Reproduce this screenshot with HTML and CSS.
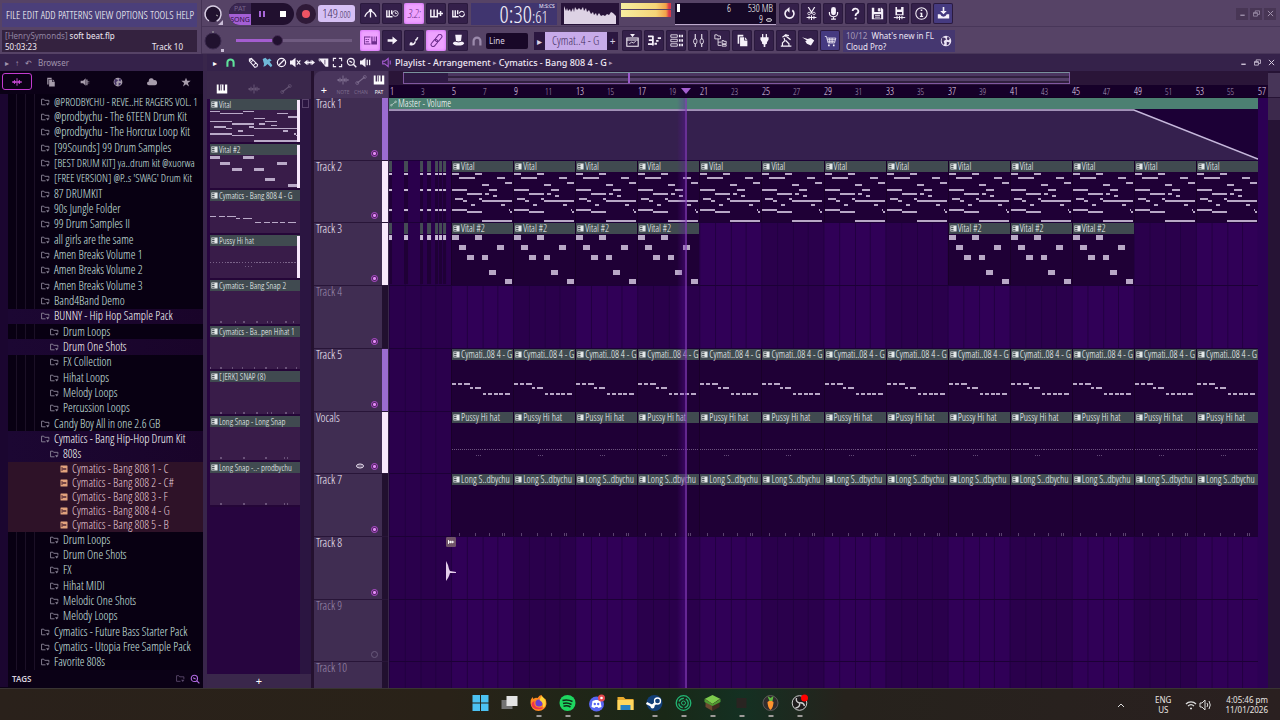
FILE: index.html
```html
<!DOCTYPE html>
<html lang="en">
<head>
<meta charset="utf-8">
<title>soft beat.flp</title>
<link rel="stylesheet" href="styles.css">
</head>
<body>
<svg class="sprite" aria-hidden="true">
  <symbol id="metronome" viewBox="0 0 16 16"><path d="M8 13V5M1 12Q3 6 8 5Q13 6 15 12" fill="none" stroke="currentColor" stroke-width="1.6"/><circle cx="8" cy="4" r="2" fill="currentColor"/></symbol>
  <symbol id="waitkeys" viewBox="0 0 16 16"><path d="M1 4v8h7M4 4v8M7 4v5" fill="none" stroke="currentColor" stroke-width="1.7"/><circle cx="11.500" cy="8" r="3.500" fill="none" stroke="currentColor"/><path d="M11.500 6v2h2" fill="none" stroke="currentColor"/></symbol>
  <symbol id="keysplus" viewBox="0 0 16 16"><path d="M1 3v9h8V3M5 3v9M10 8h6M13 5v6" fill="none" stroke="currentColor" stroke-width="1.8"/></symbol>
  <symbol id="keysloop" viewBox="0 0 16 16"><path d="M1 4v8h7M4 4v8M7 4v5" fill="none" stroke="currentColor" stroke-width="1.7"/><path d="M9 8a3 3 0 0 1 5-2l1 1M15 8a3 3 0 0 1-5 3L9 10" fill="none" stroke="currentColor" stroke-width="1.300"/></symbol>
  <symbol id="keyboard" viewBox="0 0 16 16"><path d="M0 3h8v1.200H0zM0 11.800h8V13H0zM0 3h1v10H0zM2 6h1.500v1.500H2zM4.500 6H6v1.500H4.500zM2 9h4v1H2zM9 3h1.500v6H12V3h1v6h1.500V3H16v10H9z" fill="currentColor"/></symbol>
  <symbol id="arrow" viewBox="0 0 16 16"><path d="M2 6.500h6V3l6 5-6 5V9.500H2z" fill="currentColor"/></symbol>
  <symbol id="slide" viewBox="0 0 16 16"><path d="M2 13q6 1 7-4M9 8q2-1 3-4" fill="none" stroke="currentColor" stroke-width="1.800"/><circle cx="4" cy="12" r="1.800" fill="currentColor"/></symbol>
  <symbol id="link" viewBox="0 0 16 16"><g fill="none" stroke="currentColor" stroke-width="1.300" transform="rotate(-50 8 8)"><rect x="-1" y="5.500" width="10" height="5" rx="2.500"/><rect x="7" y="5.500" width="10" height="5" rx="2.500"/></g></symbol>
  <symbol id="hat" viewBox="0 0 16 16"><path d="M4 1h8l-1 8H5z" fill="currentColor"/><ellipse cx="8" cy="11.500" rx="7" ry="2.700" fill="currentColor"/><path d="M4.500 9q3.500 1.600 7 0" stroke="#35204a" fill="none"/></symbol>
  <symbol id="magnet" viewBox="0 0 16 16"><path d="M3.500 14V8a4.500 4.500 0 0 1 9 0v6" fill="none" stroke="currentColor" stroke-width="3"/></symbol>
  <symbol id="playlist" viewBox="0 0 16 16"><path d="M1 5h14v10H1zM1 7.500h14" fill="none" stroke="currentColor" stroke-width="1.300"/><path d="M5 0h6L8 4z" fill="currentColor"/><path d="M4 12l3-2 2 1 3-2" stroke="currentColor" fill="none"/></symbol>
  <symbol id="pianoroll" viewBox="0 0 16 16"><path d="M0 3h6M1 7.500h5M0 12.500h6M6 2v12M8 12h3M10 8.500h3M12 5h4" fill="none" stroke="currentColor" stroke-width="2.200"/></symbol>
  <symbol id="rack" viewBox="0 0 16 16"><path d="M1 1h8v3H1zM1 6.500h8v3H1zM1 12h8v3H1z" fill="none" stroke="currentColor"/><path d="M11 1h2v3h-2zM14 1h2v3h-2zM11 6.500h2v3h-2zM14 6.500h2v3h-2zM11 12h2v3h-2zM14 12h2v3h-2z" fill="currentColor"/></symbol>
  <symbol id="mixer" viewBox="0 0 16 16"><path d="M4 0v16M12 0v16" stroke="currentColor" stroke-width="1.300"/><rect x="2" y="6" width="4" height="6" rx="2" fill="#35204a" stroke="currentColor"/><rect x="10" y="6" width="4" height="6" rx="2" fill="#35204a" stroke="currentColor"/></symbol>
  <symbol id="treeview" viewBox="0 0 16 16"><path d="M1 1h3l1 1.500h3V6H1zM5 6v8h4M5 10h4M10 8h2v1h3v3h-5zM10 13h5v2h-5z" fill="none" stroke="currentColor"/></symbol>
  <symbol id="files" viewBox="0 0 16 16"><path d="M2 1h7v2H4v9H2z" fill="currentColor"/><path d="M5 4h5v4h4v7H5zM11 4l3 3h-3z" fill="currentColor"/></symbol>
  <symbol id="plug" viewBox="0 0 16 16"><path d="M5 0h1.500v4h3V0H11v4h2v3l-2 3v2l-2 1v3H7v-3l-2-1v-2L3 7V4h2z" fill="currentColor"/></symbol>
  <symbol id="repair" viewBox="0 0 16 16"><path d="M3 4l4-3 4 1M5 5l1 3-3 3v4M7 8l4 4v3M1 15h13M8 3l5 4" fill="none" stroke="currentColor" stroke-width="1.500"/><circle cx="7" cy="2" r="1.500" fill="currentColor"/></symbol>
  <symbol id="tap" viewBox="0 0 16 16"><path d="M0 4l7 2 4-1 4 3-4 6-5-2-2-3 2-1z" fill="currentColor"/></symbol>
  <symbol id="cart" viewBox="0 0 16 16"><path d="M1 3h2l2 8h8l1.500-6H4M4 7h10M5 9h8M7 5v6M10 5v6" fill="none" stroke="currentColor"/><path d="M5 13h2v2H5zM11 13h2v2h-2z" fill="currentColor"/></symbol>
  <symbol id="undo" viewBox="0 0 16 16"><path d="M4.500 4a5.500 5.500 0 1 0 7 0" fill="none" stroke="currentColor" stroke-width="2"/><path d="M8 0v7L4 3.500z" fill="currentColor"/></symbol>
  <symbol id="cut" viewBox="0 0 16 16"><path d="M4 0l5 8M12 0L7 8" stroke="currentColor" stroke-width="1.500"/><circle cx="5" cy="8" r="1.600" fill="none" stroke="currentColor"/><circle cx="11" cy="8" r="1.600" fill="none" stroke="currentColor"/><path d="M2 13h12M5 11v4M8 10v6M11 11v4" stroke="currentColor" stroke-width="1.300"/></symbol>
  <symbol id="mic" viewBox="0 0 16 16"><rect x="5" y="0" width="6" height="10" rx="3" fill="currentColor"/><path d="M3 6v2a5 4 0 0 0 10 0V6M8 12v3M5 15h6" fill="none" stroke="currentColor" stroke-width="1.500"/></symbol>
  <symbol id="help" viewBox="0 0 16 16"><path d="M4.500 5a3.500 3.200 0 1 1 5 3Q8 9 8 11" fill="none" stroke="currentColor" stroke-width="2.200"/><path d="M7 13h2.300v2.300H7z" fill="currentColor"/></symbol>
  <symbol id="save" viewBox="0 0 16 16"><path fill-rule="evenodd" d="M1 1h12l2 2v12H1zM4 1v5h8V1zM3.500 9v5h9V9z" fill="currentColor"/><path d="M9 2h2v3H9zM5 10.500h6M5 12.500h6" stroke="currentColor" fill="currentColor"/></symbol>
  <symbol id="savewave" viewBox="0 0 16 16"><path fill-rule="evenodd" d="M3 0h10v10H3zM5 0v3h5V0zM5 6v3h6V6z" fill="currentColor"/><path d="M1 13h14M5 11v4M8 11v5M11 11v4" stroke="currentColor" stroke-width="1.200"/></symbol>
  <symbol id="info" viewBox="0 0 16 16"><circle cx="8" cy="8" r="7" fill="none" stroke="currentColor" stroke-width="1.300"/><path d="M7 3h2v2H7zM6 7h3v4h1v1.200H6V11h1V8H6z" fill="currentColor"/></symbol>
  <symbol id="download" viewBox="0 0 16 16"><path d="M7 0h2v5h3L8 9 4 5h3zM1 9h3q1 3 4 3t4-3h3v5H1z" fill="currentColor"/></symbol>
  <symbol id="globe" viewBox="0 0 16 16"><circle cx="8" cy="8" r="7" fill="currentColor"/><path d="M3 3l4 1 1 2-3 2 1 4-2 1-2-5zM10 2l3 2-1 3-3-1zM9 9l4 1-2 3-2 1z" fill="#453366"/></symbol>
  <symbol id="wave" viewBox="0 0 16 16"><path d="M0 8h16M2 6.500v3M4 5v6M6 6.500v3M8 2v12M10 6v4M12 5v6M14 7v2" fill="none" stroke="currentColor" stroke-width="1.400"/></symbol>
  <symbol id="speakerplug" viewBox="0 0 16 16"><path d="M1 6h4l4-4v12l-4-4H1zM10 4h2v3h3v1h-3v1h3v1h-3v3h-2z" fill="currentColor"/></symbol>
  <symbol id="cloud" viewBox="0 0 16 16"><path d="M3 13a3 3 0 0 1 0-6 4 4 0 0 1 8-2 4 4 0 0 1 2 8z" fill="currentColor"/></symbol>
  <symbol id="star" viewBox="0 0 16 16"><path d="M8 1l2 5h5.500L11 9.500l1.800 5.500L8 11.700 3.200 15 5 9.500.5 6H6z" fill="currentColor"/></symbol>
  <symbol id="pencil" viewBox="0 0 16 16"><path d="M2 3l3-1 9 9-1 3-3 1-8-9zM2 6l3-3M4 8l4-4M8 12l4-4" fill="none" stroke="currentColor" stroke-width="1.500"/></symbol>
  <symbol id="brush" viewBox="0 0 16 16"><path d="M1 3l4-2 3 3 3-2 3 3-3 2 4 5-2 3-5-5-3 3-3 1 1-4-1-3z" fill="currentColor"/></symbol>
  <symbol id="deny" viewBox="0 0 16 16"><circle cx="8" cy="8" r="6" fill="none" stroke="currentColor" stroke-width="1.800"/><path d="M12 4l-8 8" stroke="currentColor" stroke-width="1.800"/></symbol>
  <symbol id="mute" viewBox="0 0 16 16"><path d="M0 5h3l5-4v14l-5-4H0z" fill="currentColor"/><path d="M10 5l5 6M15 5l-5 6" stroke="currentColor" stroke-width="1.600"/></symbol>
  <symbol id="slip" viewBox="0 0 16 16"><path d="M0 8l5-4v3h6V4l5 4-5 4V9H5v3z" fill="currentColor"/><path d="M6 5v6M10 5v6" stroke="currentColor"/></symbol>
  <symbol id="slice" viewBox="0 0 16 16"><path d="M1 2h14v12h-4zM1 2v3l3 3" fill="currentColor"/><path d="M10 4v7" stroke="#35204a"/></symbol>
  <symbol id="select" viewBox="0 0 16 16"><path d="M2 6V2h4M10 2h4v4M14 10v4h-4M6 14H2v-4" fill="none" stroke="currentColor" stroke-width="1.600"/></symbol>
  <symbol id="zoom" viewBox="0 0 16 16"><circle cx="7" cy="7" r="5" fill="none" stroke="currentColor" stroke-width="1.800"/><path d="M11 11l4 4M5 6l4 2" stroke="currentColor" stroke-width="2"/></symbol>
  <symbol id="playback" viewBox="0 0 16 16"><path d="M0 5h3l5-4v14l-5-4H0z" fill="currentColor"/><path d="M10.500 4v8M14 4v8" stroke="currentColor" stroke-width="1.800"/></symbol>
  <symbol id="speaker" viewBox="0 0 16 16"><path d="M1 6h3l5-4v12l-5-4H1zM12 5v6" fill="none" stroke="currentColor" stroke-width="1.600"/></symbol>
  <symbol id="piano" viewBox="0 0 16 16"><path d="M1 2h2.500v8h2V2H10v8h2V2h3v12H1z" fill="currentColor"/><path d="M6.500 2h1v8h-1z" fill="#35204a"/></symbol>
  <symbol id="auto" viewBox="0 0 16 16"><path d="M3 12l10-8" stroke="currentColor" stroke-width="1.400"/><circle cx="3" cy="12" r="2" fill="none" stroke="currentColor"/><circle cx="13" cy="4" r="2" fill="none" stroke="currentColor"/></symbol>
  <symbol id="folder" viewBox="0 0 16 16"><path d="M8 13H1V3h4l1.500 2H14v4" fill="none" stroke="currentColor" stroke-width="1.600"/><path d="M9 10l6 0-3 4z" fill="currentColor"/></symbol>
  <symbol id="sample" viewBox="0 0 16 16"><rect x="1" y="1" width="14" height="14" rx="1" fill="currentColor"/><path d="M4 4v8M4 8h9M8 6v4M11 7v2" stroke="#40182a" stroke-width="1.700"/></symbol>
  <symbol id="oneshot" viewBox="0 0 16 16"><rect width="16" height="16" rx="2" fill="#705468"/><path d="M4 5v6M4 8h9M7 6v4M10 6v4" stroke="#fff" stroke-width="1.600"/></symbol>
  <symbol id="pattern" viewBox="0 0 16 16"><path fill-rule="evenodd" d="M1 1h14v14H1zM2.500 3v2H8V3zM2.500 7v2H8V7zM2.500 11v2H8v-2z" fill="currentColor"/></symbol>
  <symbol id="lips" viewBox="0 0 16 16"><ellipse cx="8" cy="8" rx="7" ry="4" fill="none" stroke="currentColor" stroke-width="2"/><path d="M3 8h10" stroke="currentColor"/></symbol>
  <symbol id="minimize" viewBox="0 0 16 16"><path d="M3 12h10" stroke="currentColor" stroke-width="3"/></symbol>
  <symbol id="restore" viewBox="0 0 16 16"><path d="M1 6h9v8H1zM1 7.500h9M5 5V2h10v8h-4" fill="none" stroke="currentColor" stroke-width="1.800"/></symbol>
  <symbol id="close" viewBox="0 0 16 16"><path d="M2 2l12 12M14 2L2 14" stroke="currentColor" stroke-width="2.200"/></symbol>
</svg>

<main class="app">
  <header class="top">
    <div class="top-left">
      <nav class="menu" aria-label="Main menu">
        <button>FILE</button><button>EDIT</button><button>ADD</button><button>PATTERNS</button><button>VIEW</button><button>OPTIONS</button><button>TOOLS</button><button>HELP</button>
      </nav>
      <div class="hint">
        <p><span class="dim">[HenrySymonds]</span> soft beat.flp</p>
        <p class="hint-row"><span>50:03:23</span><span>Track 10</span></p>
      </div>
    </div>
    <div class="bars">
      <div class="bar">
        <svg class="knob" viewBox="0 0 22 22"><circle cx="11" cy="11" r="8" fill="#21122f" stroke="#d9cfe4" stroke-width="1.500" stroke-dasharray="42 9" transform="rotate(120 11 11)"/><path d="M14 12l2 1" stroke="#aaa"/><path d="M21 17v5h-5z" fill="#c9bcd6"/></svg>
        <div class="transport">
          <span class="modes"><button>PAT</button><button class="song">SONG</button></span>
          <button class="pause" aria-label="Pause"><i></i><i></i></button>
          <button class="stop" aria-label="Stop"><i></i></button>
        </div>
        <button class="record" aria-label="Record"><i></i></button>
        <div class="tempo">149<small>.000</small></div>
        <div class="tools" data-tools="metronome waitkeys *count keysplus keysloop"></div>
        <div class="clock"><span>0:30<small>:61</small></span><sup>M:S:CS</sup></div>
        <svg class="scope" viewBox="0 0 58 22" preserveAspectRatio="none"><rect width="58" height="22" fill="#271339"/><path d="M3 21V3l2 5 1-3 1 3 2-2 1 3 2-4 1 4 1-5 2 3 2-2 2 2 2-3 1 4 2-3 1 4 2-2 2 4 2-2 1 3 2-2 1 3 2-3 2 3 2-1 2 1 2-2 2 1 2-3 2 1 2 2 1 1v8z" fill="#ddd2e4"/></svg>
        <div class="vu"><span></span><span></span></div>
        <div class="cpu"><i></i><span>6</span><span class="mem"><span>530 MB</span><span>9 <svg class="ico tiny"><use href="#lips"/></svg></span></span></div>
        <div class="tools" data-tools="undo cut mic help save savewave info =download"></div>
        <div class="win dimwin"><button aria-label="Minimize"><svg class="ico"><use href="#minimize"/></svg></button><button aria-label="Restore"><svg class="ico"><use href="#restore"/></svg></button><button aria-label="Close"><svg class="ico"><use href="#close"/></svg></button></div>
      </div>
      <div class="bar">
        <svg class="knob" viewBox="0 0 22 22"><circle cx="11" cy="11" r="8" fill="#21122f" stroke="#3b2a4e"/><path d="M11 1v2" stroke="#aaa"/><path d="M19 19h3v3h-3z" fill="#c9bcd6"/></svg>
        <input class="position" type="range" min="0" max="100" value="34" aria-label="Song position">
        <div class="tools" data-tools="*keyboard arrow slide *link hat"></div>
        <svg class="ico snap"><use href="#magnet"/></svg>
        <select class="line" aria-label="Snap"><option>Line</option></select>
        <div class="patsel"><button aria-label="Pattern menu">▸</button><select aria-label="Pattern"><option>Cymat..4 - G</option></select><button aria-label="Add pattern">+</button></div>
        <div class="tools" data-tools="playlist pianoroll rack mixer treeview files plug repair tap =cart"></div>
        <a class="news" href="#"><span><b>10/12</b>&nbsp; What's new in FL Cloud Pro?</span><svg class="ico"><use href="#globe"/></svg></a>
      </div>
    </div>
  </header>

  <div class="work">
    <aside class="browser">
      <div class="browser-head"><span>▸</span><span>↑</span><span>↶</span> Browser</div>
      <div class="tabs" id="tabs"></div>
      <div class="tree" id="tree"></div>
      <div class="tags"><button>TAGS</button><svg class="ico"><use href="#folder"/></svg><svg class="ico search"><use href="#zoom"/></svg></div>
    </aside>

    <section class="playlist">
      <div class="pl-head">
        <span class="caret">▸</span>
        <div class="pl-tools" id="pltools"></div>
        <h1><svg class="ico purple"><use href="#speaker"/></svg>Playlist - Arrangement <i>▸</i> Cymatics - Bang 808 4 - G <i>▸</i></h1>
        <div class="win"><button aria-label="Minimize"><svg class="ico"><use href="#minimize"/></svg></button><button aria-label="Restore"><svg class="ico"><use href="#restore"/></svg></button><button aria-label="Close"><svg class="ico"><use href="#close"/></svg></button></div>
      </div>
      <div class="pl-body">
        <div class="picker">
          <div class="picker-tabs"><svg class="ico on"><use href="#piano"/></svg><svg class="ico"><use href="#wave"/></svg><svg class="ico"><use href="#auto"/></svg></div>
          <div class="picker-scroll">
            <div class="picker-list" id="picker"></div>
            <div class="grip"><i></i></div>
          </div>
          <button class="add">+</button>
        </div>
        <div class="heads">
          <div class="heads-top"><button>+</button><span><svg class="ico"><use href="#wave"/></svg>NOTE</span><span><svg class="ico"><use href="#auto"/></svg>CHAN</span><span class="on"><svg class="ico"><use href="#piano"/></svg>PAT</span></div>
          <div class="clipbox"><div class="rows" id="heads"></div></div>
        </div>
        <div class="arrange">
          <div class="overview"><div class="view"><i></i></div></div>
          <div class="ruler" id="ruler"></div>
          <div class="clipbox lanes-box">
            <div class="rows lanes" id="lanes"></div>
            <div class="playhead"></div>
          </div>
        </div>
        <div class="vscroll"><i></i><b></b></div>
      </div>
    </section>
  </div>
</main>

<footer class="taskbar">
  <div class="apps">
    <button aria-label="Start"><svg viewBox="0 0 16 16"><path d="M0 0h7.500v7.500H0zM8.500 0H16v7.500H8.500zM0 8.500h7.500V16H0zM8.500 8.500H16V16H8.500z" fill="#4cc2f2"/></svg></button>
    <button aria-label="Task view"><svg viewBox="0 0 16 16"><path d="M0 5h11v9H0z" fill="#737373"/><path d="M5 1h11v10H5z" fill="#e4e4e4"/></svg></button>
    <button class="run" aria-label="Firefox"><svg viewBox="0 0 16 16"><path d="M8 16a8 8 0 0 1-8-8q0-4 2-6l1 2Q5 2 7 3q2-3 4-3 1 3 4 4 1 2 1 5a8 8 0 0 1-8 7" fill="#ff8a1f"/><path d="M1 10a7 6 0 0 0 13 1Q10 14 6 12 3 10 4 6 1 7 1 10" fill="#f0334f"/><circle cx="8.500" cy="8" r="3.600" fill="#6b3fd0"/><path d="M11 1q5 3 4 9-1 3-3 3 2-5-3-8z" fill="#ffd43a"/></svg></button>
    <button class="run" aria-label="Spotify"><svg viewBox="0 0 16 16"><circle cx="8" cy="8" r="8" fill="#1ed760"/><path d="M3 5.500q5-1.500 10 1M3.500 8.500q4.500-1.200 8.500 1M4 11.200q4-1 7 .8" fill="none" stroke="#102a18" stroke-width="1.500"/></svg></button>
    <button class="run" aria-label="Discord"><svg viewBox="0 0 16 16"><circle cx="8" cy="9" r="7.500" fill="#5865f2"/><path d="M3 12l1-6 3-1h2l3 1 1 6-3 1-1-1H7l-1 1z" fill="#fff"/><circle cx="6.300" cy="9" r="1.200" fill="#5865f2"/><circle cx="9.700" cy="9" r="1.200" fill="#5865f2"/><circle cx="13" cy="3" r="3.500" fill="#e5484d"/><circle cx="13" cy="3" r="1.300" fill="#fff"/></svg></button>
    <button aria-label="File Explorer"><svg viewBox="0 0 16 16"><path d="M0 2h6l2 2h8v11H0z" fill="#e7a92d"/><path d="M0 5h16v10H0z" fill="#ffd75e"/><path d="M3 10h10v5H3z" fill="#2582c4"/></svg></button>
    <button class="run" aria-label="Steam"><svg viewBox="0 0 16 16"><circle cx="8" cy="8" r="8" fill="#123f78"/><path d="M0 8l6 3 4-4" fill="none" stroke="#fff" stroke-width="2.500"/><circle cx="11" cy="6" r="3" fill="#123f78" stroke="#fff" stroke-width="1.300"/><circle cx="6" cy="11.500" r="2" fill="#fff"/></svg></button>
    <button class="run" aria-label="Tracker"><svg viewBox="0 0 16 16" fill="none" stroke="#22b573"><circle cx="8" cy="8" r="7.300" stroke-width="1.300"/><circle cx="8" cy="8" r="4.700" stroke-dasharray="6 2" stroke-width="1.300"/><circle cx="8" cy="8" r="2"/></svg></button>
    <button class="run" aria-label="Minecraft"><svg viewBox="0 0 16 16"><path d="M8 0l8 4-8 5-8-5z" fill="#7ccb4d"/><path d="M1 4l7 5v7l-7-4z" fill="#6b4930"/><path d="M15 4L8 9v7l7-4z" fill="#3e2a1e"/><path d="M0 4l8 5v2L0 7zM16 4L8 9v2l8-4z" fill="#4f9a32"/></svg></button>
    <button class="run" aria-label="Application"><svg viewBox="0 0 16 16"><path d="M3 3h10v10H3z" fill="#292421"/></svg></button>
    <button class="run" aria-label="FL Studio"><svg viewBox="0 0 16 16"><circle cx="8" cy="8" r="7.500" fill="#302c2d" stroke="#5e5a58"/><path d="M5 7q3-3 6 0 0 5-3 8-3-3-3-8" fill="#ff942f"/><path d="M7 6l-2-5 3 2 3-2-1 5z" fill="#5fba42"/></svg></button>
    <button class="run" aria-label="OBS"><svg viewBox="0 0 16 16"><circle cx="8" cy="8" r="7.300" fill="#1e1b1c" stroke="#ccc"/><g fill="none" stroke="#ccc" stroke-width="1.400"><path d="M8 8q-4-1-3-5M8 8q4-1 5 3M8 8q1 4-4 5"/></g><circle cx="13" cy="3" r="3.500" fill="#f00"/></svg></button>
  </div>
  <div class="tray">
    <svg class="up" viewBox="0 0 8 6"><path d="M1 5l3-3 3 3" fill="none" stroke="#ddd"/></svg><span class="lang">ENG<br>US</span>
    <svg viewBox="0 0 26 12"><path d="M1 5a7 7 0 0 1 10 0M3 7a4.500 4.500 0 0 1 6 0M5 9.500h2" fill="none" stroke="#ddd" stroke-width="1.300"/><path d="M15 4h2l3-3v10l-3-3h-2zM22 4q1.500 2 0 4M24 2q2.500 4 0 8" fill="none" stroke="#ddd"/></svg>
    <time>4:05:46 pm<br>11/01/2026</time>
  </div>
</footer>
<script src="app.js"></script>
</body>
</html>
```
FILE: styles.css
```css
* { box-sizing: border-box; margin: 0; }
:root { --narrow: "Open Sans Condensed Light", "Open Sans Condensed", "Liberation Sans Narrow", sans-serif; --wide: "Noto Sans", "Open Sans", sans-serif; }
body { height: 100vh; display: flex; flex-direction: column; overflow: hidden; background: #1c0733; color: #d9cfe2; font: 10px/12px var(--wide); }
button, select { font: inherit; color: inherit; border: 0; padding: 0; background: none; }
select { appearance: none; }
.sprite { position: absolute; width: 0; height: 0; }
.ico { width: 12px; height: 12px; flex: none; }
.app { flex: 1; min-height: 0; display: flex; flex-direction: column; }

.top { display: flex; height: 54px; background: #564366; }
.top-left { width: 202px; padding: 3px 4px 2px 2px; display: flex; flex-direction: column; gap: 3px; border-right: 1px solid #443254; }
.menu { height: 24px; display: flex; align-items: center; justify-content: space-between; padding: 0 3px 0 4px; background: #4b3f7a; font: 300 11px/14px var(--narrow); color: #fff; }
.hint { flex: 1; background: #34223f; padding: 0 14px 0 3px; font-size: 8px; line-height: 11px; color: #f0eaf4; }
.hint .dim { color: #9184a2; }
.hint-row { display: flex; justify-content: space-between; }
.bars { flex: 1; display: flex; flex-direction: column; min-width: 0; }
.bar { flex: 1; display: flex; align-items: center; border-bottom: 1px solid #483659; padding: 1px 4px 0 0; }
.knob { width: 22px; height: 22px; margin-right: 5px; flex: none; }
.transport { width: 65px; height: 22px; border-radius: 11px; background: #21102f; display: flex; overflow: hidden; }
.modes { width: 22px; display: flex; flex-direction: column; font: 7px/11px var(--wide); color: #75648a; background: #3a2650; }
.modes button { flex: 1; }
.modes .song { background: #a45fd4; color: #2b1140; }
.pause, .stop { flex: 1; display: flex; gap: 2px; align-items: center; justify-content: center; }
.pause i { width: 2px; height: 6px; background: #a767d8; }
.stop i { width: 6px; height: 6px; background: #fff; }
.record { width: 20px; height: 20px; margin: 0 2px; border-radius: 50%; background: #2f1a38; display: grid; place-items: center; }
.record i { width: 8px; height: 8px; border-radius: 50%; background: #ee5464; }
.tempo { width: 37px; height: 17px; margin-right: 5px; border-radius: 3px; background: #d6c0f4; color: #3e2d5c; font: 300 13px/17px var(--narrow); text-align: center; }
.tempo small { font-size: 9px; }
.tools { display: flex; gap: 2px; }
.tools button { width: 20px; height: 21px; display: grid; place-items: center; background: #34204a; border-radius: 2px; box-shadow: inset 0 0 0 1px #2b1a3e; color: #f6f1fa; }
.tools .ico { width: 13px; height: 13px; }
.tools .on { background: #eea2ff; color: #6d2d8d; box-shadow: inset 0 0 3px #c85cf2; font: italic 300 12px/14px var(--narrow); }
.tools .blue { background: #453a80; }
.clock { width: 86px; height: 22px; margin: 0 4px 0 3px; background: #40356f; color: #f2effa; font: 300 23px/22px var(--narrow); display: flex; justify-content: flex-end; padding-right: 3px; align-items: flex-start; }
.clock small { font-size: 16px; }
.clock sup { width: 15px; margin-left: -9px; font: 5px/6px var(--wide); }
.scope { width: 58px; height: 22px; }
.vu { width: 50px; height: 22px; margin: 0 4px 0 2px; display: flex; flex-direction: column; gap: 1px; }
.vu span { height: 6px; background: linear-gradient(90deg, #f7eda0, #f5d577 70%, #f2a248 90%, #dc3848 96%); }
.vu span + span { height: 7px; }
.cpu { width: 101px; height: 22px; background: #160827; display: flex; padding: 0 3px 0 2px; font: 300 10px/11px var(--narrow); border-bottom: 1px solid #bda9cc; color: #fff; margin-right: 3px; }
.cpu i { width: 3px; height: 8px; margin: 1px auto 0 0; background: #fff; }
.cpu .mem { width: 42px; display: flex; flex-direction: column; align-items: flex-end; }
.tiny { width: 8px; height: 6px; }
.win { margin-left: auto; display: flex; gap: 2px; }
.win button { width: 12px; height: 12px; display: grid; place-items: center; }
.win .ico { width: 7px; height: 7px; }
.dimwin button { background: #483655; color: #a294af; }
.position { appearance: none; width: 116px; height: 14px; margin: 0 8px 0 7px; background: linear-gradient(90deg, #a45dd0 34%, #6f5b80 34%) center / 100% 3px no-repeat; }
.position::-webkit-slider-thumb { appearance: none; width: 11px; height: 11px; border-radius: 50%; background: #21102f; border: 1px solid #493059; }
.snap { margin: 0 3px 0 3px; color: #9c8bac; }
.line { width: 42px; height: 16px; margin-right: 6px; padding-left: 3px; background: #190828; border-radius: 2px; font-size: 8px; }
.patsel { display: flex; height: 18px; margin-right: 4px; background: #2b1740; }
.patsel button { width: 11px; }
.patsel select { width: 62px; padding-left: 7px; background: #c7abe9; color: #3f2a5c; font: 300 12px/18px var(--narrow); }
.news { width: 112px; height: 22px; margin-left: 3px; padding: 0 3px; display: flex; align-items: center; gap: 2px; background: #453770; color: #ece5f4; text-decoration: none; font-size: 8px; line-height: 11px; }
.news b { color: #a79ab8; font-weight: 400; }
.news span { flex: 1; }

.work { flex: 1; min-height: 0; display: flex; }
.browser { width: 203px; display: flex; flex-direction: column; background: #0b0116; }
.browser-head { height: 17px; display: flex; align-items: center; gap: 6px; padding-left: 5px; background: #35224a; color: #a195ae; font-size: 8px; }
.tabs { height: 23px; display: flex; padding: 2px; gap: 4px; }
.tabs button { width: 30px; height: 17px; display: grid; place-items: center; color: #a79dac; }
.tabs .ico { width: 10px; height: 10px; }
.tabs button.on { border: 1px solid #c33bd0; border-radius: 3px; color: #d94fe6; }
.tree { flex: 1; min-height: 0; display: flex; flex-direction: column; border-left: 8px solid #1b0630; background: repeating-linear-gradient(90deg, transparent 0 8px, #1b1026 8px 9px) 0 0 / 28px 100% no-repeat, #080012; font: 300 12px/14px var(--narrow); overflow: hidden; }
.node { flex: 1; display: flex; align-items: center; gap: 4px; padding-left: 33px; color: #d0e6e0; white-space: nowrap; }
.node.long { font-size: 11px; }
.node .ico { width: 9px; height: 10px; color: #8c8698; }
.node.child { padding-left: 42px; }
.node.open { color: #fff; background: linear-gradient(90deg, #1c0733, #190429); }
.node.file { flex: 0 0 14px; padding-left: 52px; gap: 4px; color: #e8ccd8; background: #2e1228; }
.node.file .ico { width: 8px; height: 8px; color: #e2a27d; }
.tags { height: 17px; margin-bottom: 1px; border-left: 8px solid #1b0630; display: flex; align-items: center; gap: 5px; padding-right: 3px; color: #5b4a6c; }
.tags button { color: #d8d0dd; font: 600 8px/12px var(--wide); margin: 0 auto 0 4px; }
.tags .ico { width: 9px; height: 9px; }
.tags .search { color: #b069e0; width: 10px; height: 10px; }

.playlist { flex: 1; min-width: 0; display: flex; flex-direction: column; border-left: 4px solid #39264b; background: #3a274b; }
.pl-head { height: 17px; display: flex; align-items: center; background: #35224a; padding-right: 3px; }
.caret { width: 18px; padding-left: 6px; color: #fff; font-size: 8px; }
.pl-tools { display: flex; gap: 3px; color: #f6f1fa; }
.pl-tools .ico { width: 11px; height: 11px; }
.pl-tools .green { color: #5fe39b; margin-right: 9px; }
.pl-tools .cyan { color: #6fb8d8; }
.pl-head h1 { display: flex; align-items: center; gap: 2px; margin-left: 11px; font: 500 9px/14px var(--wide); color: #efe8f4; white-space: nowrap; }
.pl-head h1 i { font: 7px/10px var(--wide); color: #a392b4; }
.purple { color: #a35bd0; width: 11px; height: 11px; }
.pl-body { flex: 1; min-height: 0; display: flex; }
.picker { width: 107px; display: flex; flex-direction: column; border-right: 3px solid #24112f; }
.picker-tabs { height: 28px; display: flex; align-items: center; gap: 20px; padding: 7px 9px 0 9px; color: #655474; }
.on.ico { color: #fff; }
.picker-scroll { flex: 1; min-height: 0; display: flex; background: #27053f; }
.picker-list { width: 93px; height: 408px; padding-left: 3px; display: grid; grid-template: repeat(9, minmax(0, 1fr)) / minmax(0, 1fr); }
.grip { flex: 1; background: #2b1541; }
.grip i { display: block; width: 7px; height: 9px; margin: 0 auto; border: 1px solid #59436c; }
.add { height: 14px; color: #fff; font-size: 11px; }
.pat { display: flex; flex-direction: column; border-bottom: 2px solid #250638; position: relative; background: #391c49; color: #b5a9c2; }
.pat.sel::after { content: ""; position: absolute; right: 0; top: 1px; bottom: 0; width: 3px; background: #f7e7fb; }
.title { height: 11px; flex: none; display: flex; align-items: center; gap: 1px; padding-left: 1px; background: #404a50; color: #f4fafa; font: 300 10px/11px var(--narrow); white-space: nowrap; }
.pat .title { font-size: 9px; }
.title .ico { width: 7px; height: 7px; color: #e3e8e8; }
.art { flex: 1; min-height: 0; width: 100%; display: block; }
.heads { width: 74px; display: flex; flex-direction: column; background: #3a274b; }
.heads-top { height: 27px; display: flex; align-items: flex-end; background: #49355c; border-radius: 8px 0 0 0; color: #7c6b8d; font: 5px/8px var(--wide); text-align: center; }
.heads-top button { width: 20px; height: 16px; color: #fff; font-size: 11px; }
.heads-top span { width: 18px; height: 24px; display: flex; flex-direction: column; align-items: center; gap: 2px; }
.heads-top .on, .heads-top .on .ico { color: #fff; }
.clipbox { flex: 1; min-height: 0; overflow: hidden; position: relative; }
.rows { height: 627px; display: flex; flex-direction: column; }
.head { flex: 1; display: grid; grid-template-columns: 1fr auto 6px; border-bottom: 1px solid #281538; padding-left: 2px; font: 300 12px/12px var(--narrow); color: #f4ecfa; background: #402d52; }
.head .led { width: 7px; height: 7px; margin: auto 4px 3px 0; align-self: end; border: 1px solid #b34dd0; border-radius: 50%; background: radial-gradient(#e28cf5 30%, #401a52 60%); }
.head .strip { background: #21102f; width: 6px; }
.head.white .strip { background: #f8e8fc; }
.head.violet .strip { background: #9b6cd0; }
.head.off { color: #9c8cae; }
.head.idle .led { border-color: #6a5a7c; background: none; }
.head .side { display: flex; align-items: flex-end; gap: 6px; }
.head .side .ico { width: 10px; height: 8px; margin-bottom: 3px; }

.arrange { flex: 1; min-width: 0; display: flex; flex-direction: column; background: #2b0050; margin-left: 1px; }
.overview { height: 14px; background: #2a1538; padding: 1px 198px 1px 14px; }
.view { height: 12px; border: 1px solid #8058a0; border-top-color: #79919c; background: linear-gradient(90deg, #2f1a45 44px, transparent 44px), linear-gradient(#4b3560 3px, #30203e 3px 5px, #55406a 5px 8px, #30203e 8px); }
.view i { display: block; height: 10px; width: 34%; border-right: 2px solid #9b5acb; }
.ruler { height: 13px; display: grid; grid-template-columns: repeat(28, minmax(0, 1fr)) 10px; padding-left: 1px; position: relative; background: #160029; color: #e4d8f0; font: 300 10px/13px var(--narrow); border-bottom: 1px solid #120020; }
.ruler .minor { color: #a898bb; font-size: 9px; }
.ruler::after { content: ""; position: absolute; left: 33.2%; bottom: 3px; border: 5px solid transparent; border-width: 6px 5px 0; border-top-color: #a45fd0; }
.lanes { margin-right: 10px; }
.lanes-box { background: #2c0054; }
.lane { flex: 1; min-height: 0; display: grid; grid-template-columns: repeat(14, minmax(0, 1fr)); border-bottom: 1px solid #1c0036; background: repeating-linear-gradient(90deg, #210040 0 1px, transparent 1px 25%) 0 0 / 7.143% 100%, linear-gradient(90deg, #2a004c 50%, #300057 50%) 0 0 / 14.286% 100%; }
.clip { display: flex; flex-direction: column; min-width: 0; background: #1f0036; border-left: 1px solid #190029; }
.clip.wide { grid-column: 1 / -1; background: #1c0036; border: 0; }
.wide .title { background: #4c8072; color: #fff; }
.intro { border: 0; background: none; }
.tiny-clip { width: 9px; height: 100%; margin-left: auto; position: relative; right: -4px; }
.tiny-clip .ico { display: block; width: 10px; height: 10px; }
.playhead { position: absolute; top: 0; bottom: 0; left: 32.8%; width: 10px; border-right: 2px solid #8038b4b0; background: linear-gradient(90deg, transparent, #6a12b055); }
.vscroll { width: 12px; background: #261335; display: flex; flex-direction: column; gap: 1px; padding-top: 2px; }
.vscroll i { height: 24px; background: #473558; }
.vscroll b { height: 22px; background: #3c294c; }

.taskbar { height: 32px; display: flex; align-items: center; justify-content: flex-end; position: relative; border-top: 1px solid #393432; background: linear-gradient(90deg, #2a211b, #292218 35%, #192817 52%, #143022 58%, #26221c 66%, #2a2020); color: #e9e5e2; font-size: 8px; line-height: 10px; }
.apps { position: absolute; left: 50%; transform: translateX(-50%); display: flex; gap: 9px; }
.apps button { width: 20px; height: 28px; padding-top: 4px; border-bottom: 2px solid transparent; }
.apps svg { width: 16px; height: 16px; display: block; margin: 0 auto 6px; overflow: visible; }
.apps .run { background: linear-gradient(#9d9a98, #9d9a98) center bottom / 5px 2px no-repeat; }
.tray { display: flex; align-items: center; gap: 14px; padding-right: 12px; }
.tray .lang { text-align: center; margin-left: 16px; }
.tray svg { width: 26px; height: 12px; }
.tray .up { width: 8px; height: 6px; }
.tray time { text-align: right; }
```
FILE: app.js
```js
const $ = id => document.getElementById(id);
const ico = (name, cls = "") => `<svg class="ico ${cls}"><use href="#${name}"/></svg>`;

document.querySelectorAll("[data-tools]").forEach(box => {
  box.innerHTML = box.dataset.tools.split(" ").map(t => {
    const cls = t[0] === "*" ? "on" : t[0] === "=" ? "blue" : "";
    const name = t.replace(/^[*=]/, "");
    return `<button class="${cls}" aria-label="${name}">${name === "count" ? "3.2:" : ico(name)}</button>`;
  }).join("");
});

$("tabs").innerHTML = ["wave", "files", "speakerplug", "globe", "cloud", "star"]
  .map((n, i) => `<button class="${i ? "" : "on"}" aria-label="${n}">${ico(n)}</button>`).join("");

$("pltools").innerHTML = ["magnet green", "pencil", "brush cyan", "deny", "mute", "slip", "slice", "select", "zoom", "playback"]
  .map(t => { const [n, c] = t.split(" "); return ico(n, c || ""); }).join("");

// Prefix: "!" open folder, ">" child folder, ">!" open child, "~" sample file, "^" long name in smaller type
const tree = ["^@PRODBYCHU - REVE..HE RAGERS VOL. 1", "@prodbychu - The 6TEEN Drum Kit", "@prodbychu - The Horcrux Loop Kit",
  "[99Sounds] 99 Drum Samples", "^[BEST DRUM KIT] ya..drum kit @xuorwa", "^[FREE VERSION] @P..s 'SWAG' Drum Kit", "87 DRUMKIT",
  "90s Jungle Folder", "99 Drum Samples II", "all girls are the same", "Amen Breaks Volume 1", "Amen Breaks Volume 2",
  "Amen Breaks Volume 3", "Band4Band Demo", "!BUNNY - Hip Hop Sample Pack", ">Drum Loops", ">!Drum One Shots", ">FX Collection",
  ">Hihat Loops", ">Melody Loops", ">Percussion Loops", "Candy Boy All in one 2.6 GB", "!Cymatics - Bang Hip-Hop Drum Kit", ">!808s",
  "~Cymatics - Bang 808 1 - C", "~Cymatics - Bang 808 2 - C#", "~Cymatics - Bang 808 3 - F", "~Cymatics - Bang 808 4 - G",
  "~Cymatics - Bang 808 5 - B", ">Drum Loops", ">Drum One Shots", ">FX", ">Hihat MIDI", ">Melodic One Shots", ">Melody Loops",
  "Cymatics - Future Bass Starter Pack", "Cymatics - Utopia Free Sample Pack", "Favorite 808s"];
const flagClass = { ">": "child", "!": "open", "~": "file", "^": "long" };
$("tree").innerHTML = tree.map(t => {
  const [, flags, name] = t.match(/^([>!~^]*)(.*)$/);
  const cls = ["node", ...[...flags].map(f => flagClass[f])].join(" ");
  return `<div class="${cls}">${ico(flags === "~" ? "sample" : "folder")}<span>${name}</span></div>`;
}).join("");

// Notes as [x, y, width, height] in a 62 x 51 clip
const ticks = xs => xs.map(x => [x, 48, 1, 3, .35]);
const art = {
  vital: [[0,1,7],[23,1,7],[7,5,16],[46,5,8],[54,10,7],[30,12,8],[0,17,15],[38,17,8],[15,21,15],[34,21,4],[42,23,4],[3,26,8],[27,26,3],
    [11,28,4],[30,28,31],[19,32,4],[50,32,4],[0,37,15],[58,37,1],[59,39,2],[15,39,15],[30,48,31]].map(n => [...n, 2]),
  vital2: [[0,1],[23,1],[7,11],[46,11],[15,21],[30,21],[38,36],[54,45]].map(([x, y]) => [x, y, 7, 5]),
  bass: [[0,23,4],[6,23,4],[12,23,6],[18,27,3],[23,27,6],[31,33,4],[37,33,4],[43,33,4],[48,33,4],[54,33,5]].map(n => [...n, 2]),
  hat: [...Array.from({ length: 31 }, (_, i) => [i * 2, 26, 1, 1, .45]), [24,32,1,1,.4], [26,32,1,1,.4], [28,32,1,1,.4]],
  long: ticks([7, 23, 38, 51, 53]),
  snap: ticks([7, 17, 23, 32, 39, 42, 52, 57]),
  open: ticks([0, 7, 15, 22, 30, 38, 46, 52, 59]),
};
const draw = name => `<svg class="art" viewBox="0 0 62 51" preserveAspectRatio="none" shape-rendering="crispEdges">${
  art[name].map(([x, y, w, h, o = .9]) => `<rect x="${x}" y="${y}" width="${w}" height="${h}" fill="#c9bad6" opacity="${o}"/>`).join("")}</svg>`;
const title = (text, icon = "pattern") => `<div class="title">${ico(icon)}<span>${text}</span></div>`;

$("picker").innerHTML = [["Vital", "vital", 1], ["Vital #2", "vital2", 1], ["Cymatics - Bang 808 4 - G", "bass"], ["Pussy Hi hat", "hat", 1],
  ["Cymatics - Bang Snap 2", "snap"], ["Cymatics - Ba..pen Hihat 1", "open"], ["[JERK] SNAP (8)", "snap"], ["Long Snap - Long Snap", "long"],
  ["Long Snap -..- prodbychu", "long"]].map(([n, a, s]) => `<div class="pat${s ? " sel" : ""}">${title(n)}${draw(a)}</div>`).join("");

$("heads").innerHTML = [["Track 1", "violet"], ["Track 2", "white"], ["Track 3", "white"], ["Track 4", "off"], ["Track 5", "violet"],
  ["Vocals", "white"], ["Track 7", ""], ["Track 8", ""], ["Track 9", "off idle"], ["Track 10", "off idle"]]
  .map(([n, c]) => `<div class="head ${c}"><span>${n}</span><span class="side">${n === "Vocals" ? ico("lips") : ""}<i class="led"></i></span><i class="strip"></i></div>`).join("");

$("ruler").innerHTML = Array.from({ length: 29 }, (_, i) => `<span class="${i % 2 ? "minor" : ""}">${i * 2 + 1}</span>`).join("");

const clip = (text, a) => `<div class="clip">${title(text)}${draw(a)}</div>`;
const gap = n => `<div style="grid-column: span ${n}"></div>`;
const slivers = [[0, 3], [15, 4], [31, 3], [38, 4], [46, 3], [50, 3], [54, 3]];
const intro = rows => `<svg class="art intro" viewBox="0 0 62 62" preserveAspectRatio="none">${slivers.map(([x, w]) =>
  `<rect x="${x}" width="${w}" height="61" fill="#1f0036"/><rect x="${x}" width="${w}" height="11" fill="#454c55"/>` +
  rows.map(([y, h]) => `<rect x="${x}" y="${y}" width="${w}" height="${h}" fill="#c9bad6"/>`).join("")).join("")}</svg>`;
const lanes = [
  `<div class="clip wide">${title("Master - Volume", "auto")}<svg class="art" viewBox="0 0 868 51" preserveAspectRatio="none"><path d="M0 1H744L868 50V51H0z" fill="#35204e"/><path d="M0 1H744L868 50" fill="none" stroke="#c6b8dc" stroke-width="1.500"/></svg></div>`,
  intro([[12, 2], [28, 2], [48, 2]]) + clip("Vital", "vital").repeat(13),
  intro([[12, 5]]) + clip("Vital #2", "vital2").repeat(4) + gap(4) + clip("Vital #2", "vital2").repeat(3),
  "",
  gap(1) + clip("Cymati..08 4 - G", "bass").repeat(13),
  gap(1) + clip("Pussy Hi hat", "hat").repeat(13),
  gap(1) + clip("Long S..dbychu", "long").repeat(13),
  `<div class="tiny-clip">${ico("oneshot")}<svg width="10" height="46" viewBox="0 0 10 46"><path d="M0 14l2 4 1 4 1 2 6 1v1l-6 0-1 3-1 2-2 3z" fill="#e3cdea"/></svg></div>`,
  "", ""];
$("lanes").innerHTML = lanes.map(l => `<div class="lane">${l}</div>`).join("");
```
